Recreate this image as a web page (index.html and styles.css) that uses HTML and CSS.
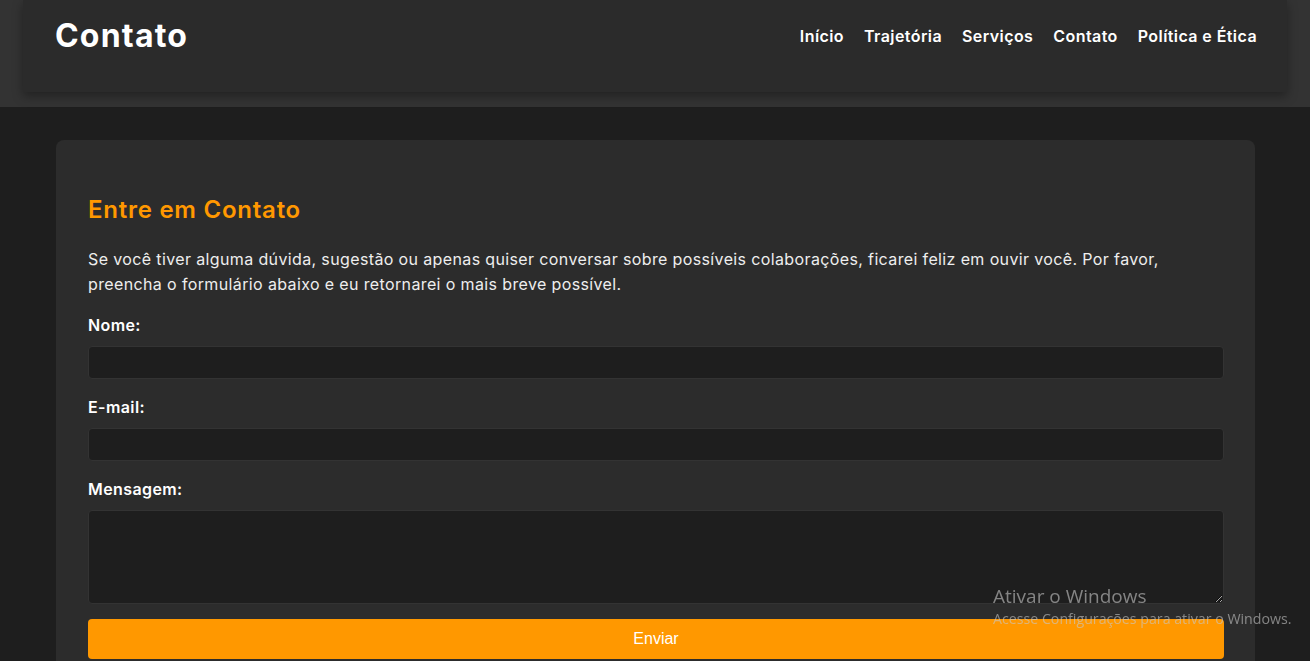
FILE: index.html
```html
<!DOCTYPE html>
<html lang="pt-BR">
<head>
<meta charset="utf-8">
<title>Contato</title>
<link rel="stylesheet" href="styles.css">
</head>
<body>
<div class="header-wrap">
  <header class="header">
    <h1 class="site-title">Contato</h1>
    <nav class="nav">
      <a href="#">Início</a>
      <a href="#">Trajetória</a>
      <a href="#">Serviços</a>
      <a href="#">Contato</a>
      <a href="#">Política e Ética</a>
    </nav>
  </header>
</div>
<main class="main">
  <section class="card">
    <h2 class="card-title">Entre em Contato</h2>
    <p class="intro">Se você tiver alguma dúvida, sugestão ou apenas quiser conversar sobre possíveis colaborações, ficarei feliz em ouvir você. Por favor, preencha o formulário abaixo e eu retornarei o mais breve possível.</p>
    <form class="form">
      <label class="label" for="nome">Nome:</label>
      <input class="field" id="nome" type="text">
      <label class="label" for="email">E-mail:</label>
      <input class="field" id="email" type="email">
      <label class="label" for="msg">Mensagem:</label>
      <textarea class="field area" id="msg"></textarea>
      <button class="btn" type="button">Enviar</button>
    </form>
  </section>
</main>
<div class="watermark">
  <div class="wm-title">Ativar o Windows</div>
  <div class="wm-sub">Acesse Configurações para ativar o Windows.</div>
</div>
</body>
</html>
```
FILE: styles.css
```css
* { box-sizing: border-box; }
html, body { margin: 0; padding: 0; }
body {
  background: #1e1e1e;
  color: #eeeeee;
  font-family: "Inter", "Noto Sans", sans-serif;
  height: 661px;
  overflow: hidden;
}
.header-wrap {
  background: #333333;
  padding: 0 23px 15px;
}
.header {
  background: #2b2b2b;
  height: 92px;
  padding: 0 30px 20px 32px;
  display: flex;
  align-items: center;
  justify-content: space-between;
  box-shadow: 0 4px 10px rgba(0,0,0,0.35);
}
.site-title {
  margin: 0 0 2px;
  font-size: 32px;
  font-weight: 700;
  color: #ffffff;
  letter-spacing: 1.2px;
}
.nav { display: flex; gap: 20px; }
.nav a {
  color: #ffffff;
  text-decoration: none;
  font-size: 16px;
  font-weight: 600;
  letter-spacing: 0.42px;
}
.main { padding: 33px 55px 0 56px; }
.card {
  background: #2c2c2c;
  border-radius: 8px;
  padding: 32px 31px 40px 32px;
}
.card-title {
  margin: 20px 0 19px;
  font-size: 24px;
  line-height: 36px;
  font-weight: 600;
  color: #ff9800;
  letter-spacing: 0.75px;
}
.intro {
  margin: 0 0 16px;
  font-size: 16px;
  line-height: 25px;
  color: #eeeeee;
  letter-spacing: 0.37px;
}
.form { display: flex; flex-direction: column; }
.label {
  font-size: 16px;
  line-height: 25px;
  font-weight: 600;
  color: #ffffff;
  margin-bottom: 8px;
  letter-spacing: 0.4px;
}
.field {
  height: 33px;
  background: #1e1e1e;
  border: 1px solid #333333;
  border-radius: 4px;
  margin: 0 0 16px;
  color: #fff;
  font: inherit;
}
.area { height: 94px; margin-bottom: 15px; resize: vertical; }
.btn {
  height: 40px;
  background: #ff9800;
  border: none;
  border-radius: 4px;
  color: #ffffff;
  font-family: "Liberation Sans", Arial, sans-serif;
  font-size: 16px;
}
.watermark {
  position: fixed;
  left: 993px;
  top: 584px;
  color: rgba(200,200,200,0.6);
  font-family: "Open Sans", "Noto Sans", sans-serif;
}
.wm-title { font-size: 19px; line-height: 25px; }
.wm-sub { font-size: 14.2px; line-height: 19px; }
```
